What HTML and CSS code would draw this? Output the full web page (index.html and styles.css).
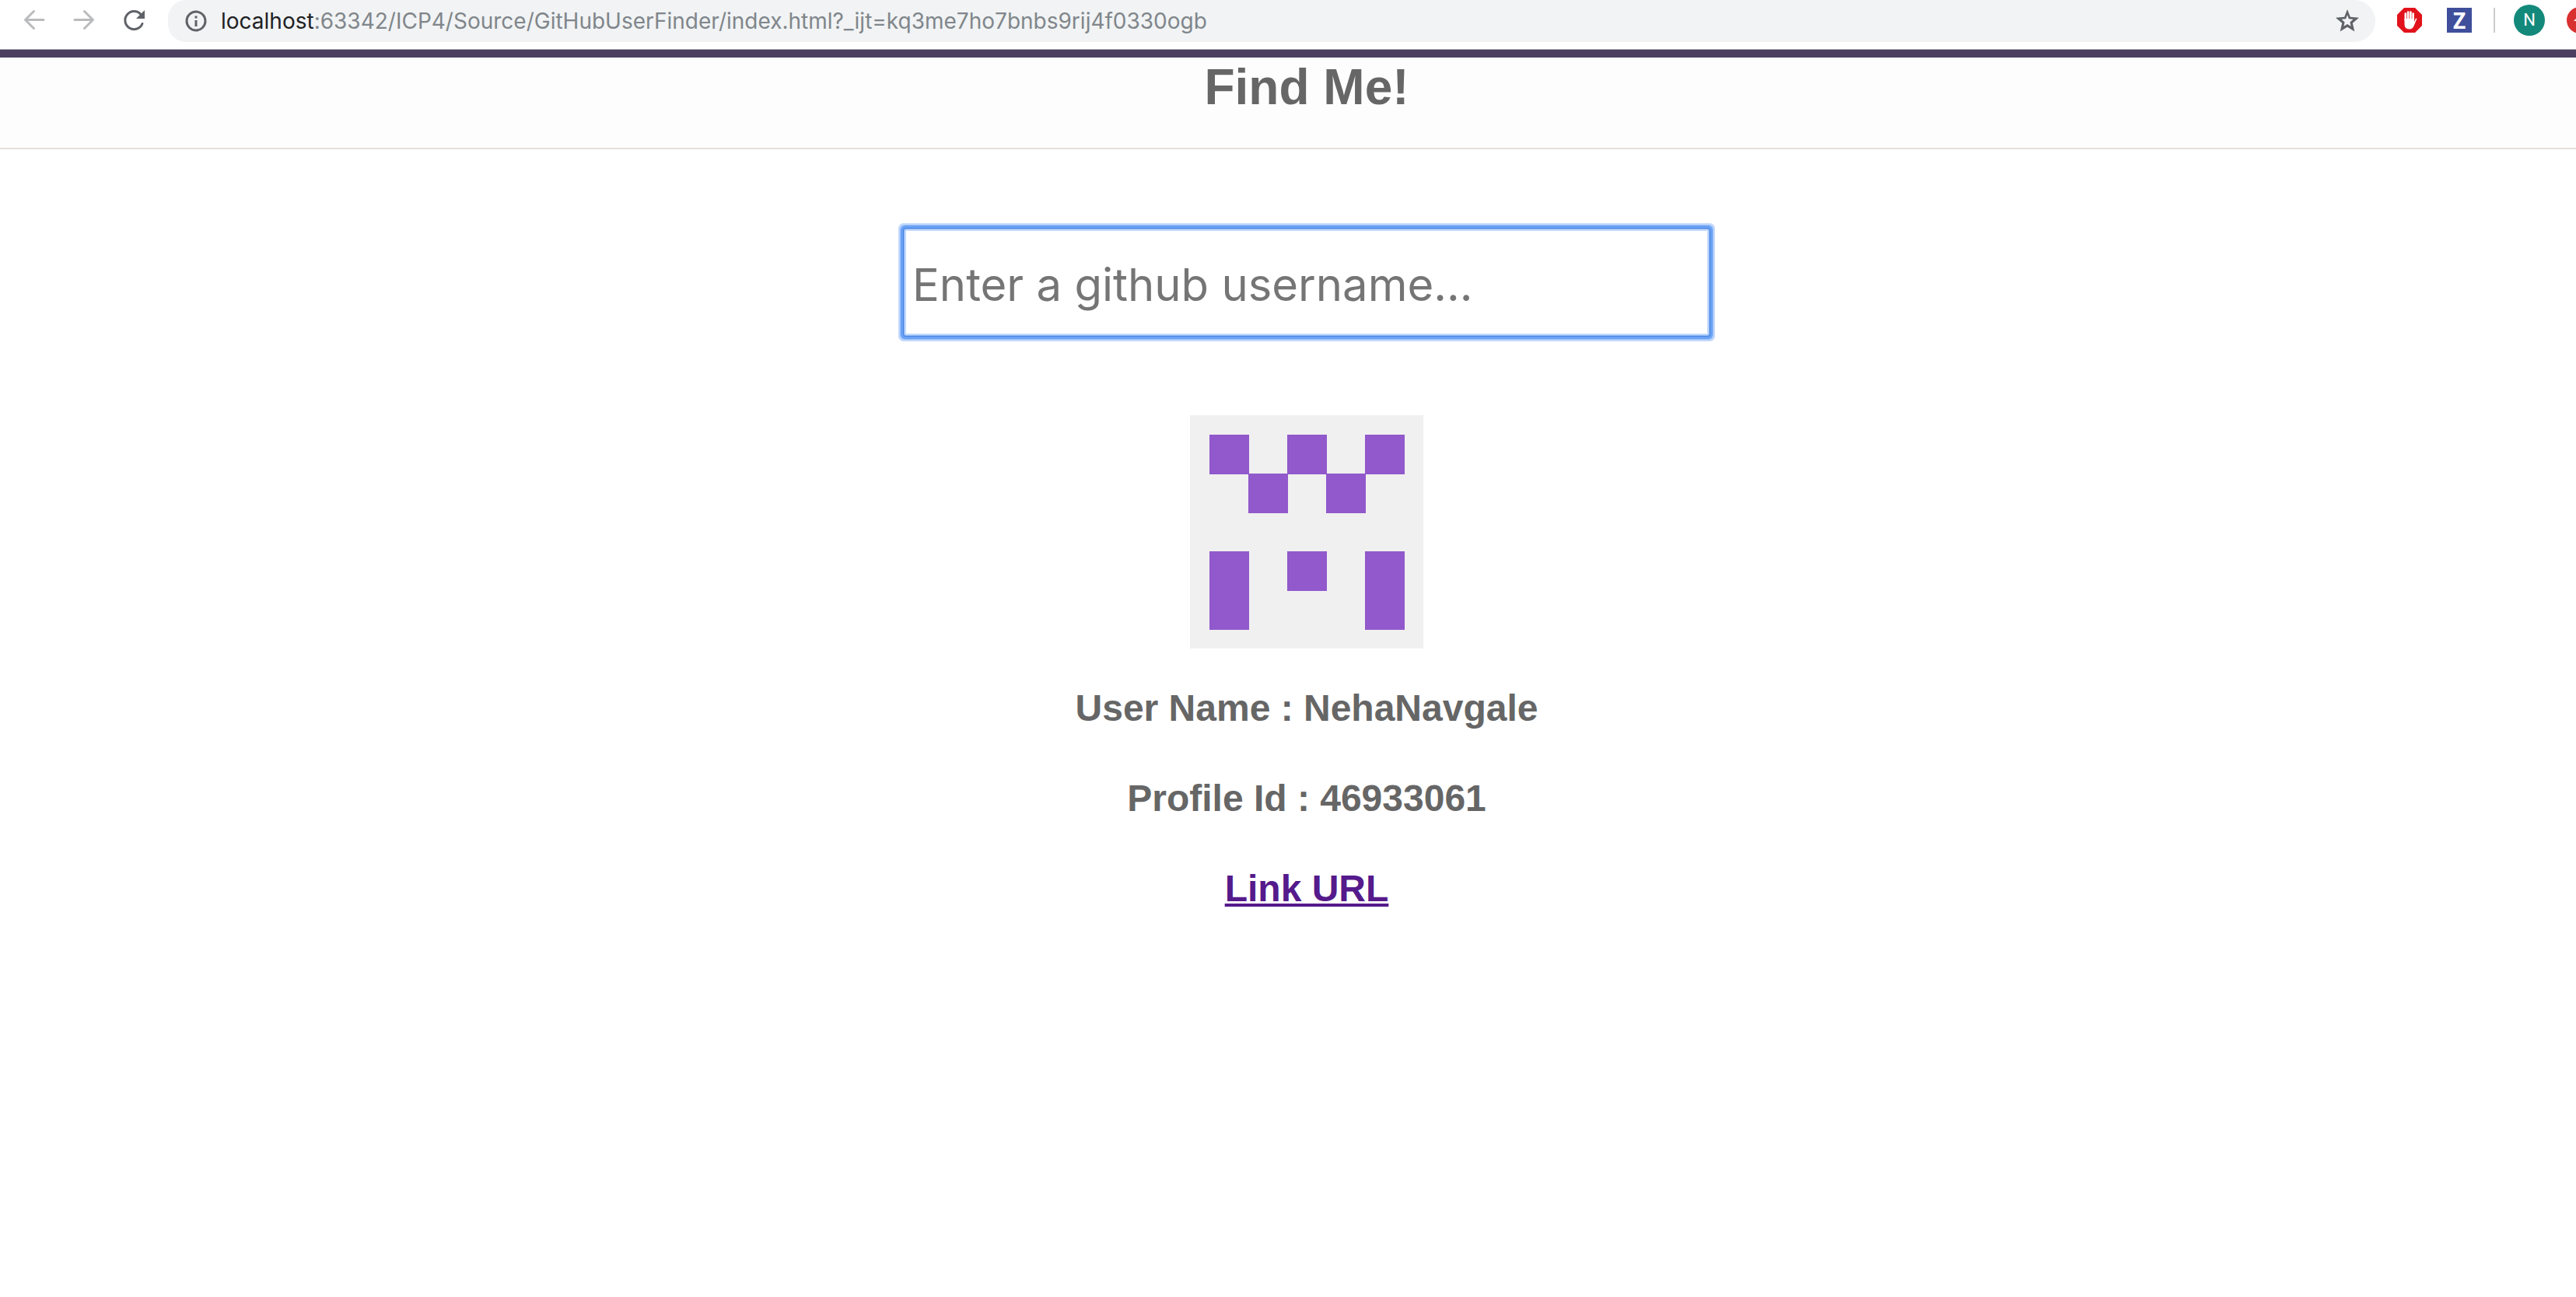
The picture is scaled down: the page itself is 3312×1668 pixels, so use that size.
FILE: index.html
```html
<!DOCTYPE html>
<html lang="en">
<head>
<meta charset="utf-8">
<title>Find Me!</title>
<link rel="stylesheet" href="styles.css">
</head>
<body>
<div class="toolbar">
  <div class="nav">
    <button class="icon-btn faded" type="button" aria-label="Back"><svg viewBox="0 0 32 32"><path d="M28 15.500H4.500M15.500 4.500l-11 11 11 11"/></svg></button>
    <button class="icon-btn faded" type="button" aria-label="Forward"><svg viewBox="0 0 32 32"><path d="M4 15.500h23.500M16.500 4.500l11 11-11 11"/></svg></button>
    <button class="icon-btn" type="button" aria-label="Reload"><svg viewBox="0 0 32 32"><path d="M27 20.500A11.500 11.500 0 1 1 25 8.500"/><path class="solid" d="M30 3v11H19z"/></svg></button>
  </div>
  <div class="omnibox">
    <svg class="info" viewBox="0 0 32 32"><circle cx="16" cy="16" r="12"/><path d="M16 15v8M16 9.500v3"/></svg>
    <span class="url"><span class="host">localhost</span>:63342/ICP4/Source/GitHubUserFinder/index.html?_ijt=kq3me7ho7bnbs9rij4f0330ogb</span>
    <button class="icon-btn star" type="button" aria-label="Bookmark"><svg viewBox="0 0 32 32"><path fill="currentColor" stroke="none" fill-rule="evenodd" d="M16 1l3.800 9.800L31 11.800l-8.200 7L25.300 29.500 16 23.800 6.700 29.500l2.500-10.700L1 11.800l11.200-1zM16 8.200l-1.900 5-5.600.5 4.100 3.700-1.200 5.400 4.600-2.800 4.600 2.800-1.200-5.400 4.100-3.700-5.600-.5z"/></svg></button>
  </div>
  <div class="extensions">
    <svg class="ext" viewBox="0 0 32 32"><path fill="#e1121b" d="M9 0h14l9 9v14l-9 9H9l-9-9V9z"/><path fill="none" stroke="#fff" stroke-width="2.600" stroke-linecap="round" d="M10.800 16V7.500M14.100 15V5.500M17.400 15V5.500M20.600 16V7.500"/><path fill="#fff" d="M9.500 14h12.400v4.500l2-4.700q1.300-.7 1.400.7L21.500 23.500Q20 27.500 15.500 27.500q-6 0-6-6.500z"/></svg>
    <span class="ext zed">Z</span>
    <span class="divider"></span>
    <span class="avatar">N</span>
    <span class="alert"><svg viewBox="0 0 34 34"><circle cx="17" cy="17" r="17" fill="#d93030"/><path d="M9 18l8-8 8 8z" fill="#fff"/></svg></span>
  </div>
</div>
<header class="banner"><h1>Find Me!</h1></header>
<main class="content">
  <input class="search" type="text" aria-label="GitHub username" placeholder="Enter a github username...">
  <svg class="identicon" viewBox="0 0 300 300" role="img" aria-label="Profile picture"><path fill="#9159cb" d="M25 25h51v51H25zM125 25h51v51h-51zM225 25h51v51h-51zM75 75h51v51H75zM175 75h51v51h-51zM25 175h51v101H25zM125 175h51v51h-51zM225 175h51v101h-51z"/></svg>
  <div class="profile">
    <h2>User Name : NehaNavgale</h2>
    <h2>Profile Id : 46933061</h2>
    <h2><a href="#">Link URL</a></h2>
  </div>
</main>
</body>
</html>
```
FILE: styles.css
```css
* { box-sizing: border-box; }

body {
  margin: 0;
  background: #fff;
  color: #666;
  font-family: "Liberation Sans", Arial, sans-serif;
  overflow-x: hidden;
}

.toolbar {
  display: flex;
  align-items: flex-start;
  height: 64px;
  padding-left: 28px;
  border-bottom: 1px solid #b0adb4;
  background: #fff;
  overflow: hidden;
}

.nav {
  display: flex;
  gap: 32px;
  width: 188px;
  padding-top: 10px;
}

.icon-btn {
  display: block;
  width: 32px;
  height: 32px;
  padding: 0;
  border: 0;
  background: none;
  color: #5f6368;
}

.icon-btn svg {
  display: block;
  fill: none;
  stroke: currentColor;
  stroke-width: 3;
  stroke-linecap: round;
  stroke-linejoin: round;
}

.icon-btn .solid { fill: currentColor; stroke: none; }
.faded { color: #babbbd; }

.omnibox {
  display: flex;
  flex: 1;
  align-items: center;
  height: 54px;
  padding: 0 20px;
  border-radius: 24px 28px 28px 24px;
  background: #f1f3f4;
}

.info {
  width: 32px;
  height: 32px;
  fill: none;
  stroke: #5f6368;
  stroke-width: 3;
}

.url {
  flex: 1;
  padding-left: 16px;
  color: #80868b;
  font: 28px/36px Inter, sans-serif;
}

.host { color: #202124; }

.extensions {
  display: flex;
  align-items: center;
  height: 52px;
  margin-left: 28px;
}

.ext {
  flex: none;
  width: 32px;
  height: 32px;
  margin-right: 32px;
}

.zed {
  margin-right: 28px;
  background: #3f4f9b;
  color: #fff;
  font: 700 28px/32px "Open Sans", sans-serif;
  text-align: center;
}

.divider {
  width: 2px;
  height: 32px;
  margin-right: 24px;
  background: #ccc;
}

.avatar {
  width: 40px;
  height: 40px;
  margin-right: 28px;
  border-radius: 50%;
  background: #13897b;
  color: #fff;
  font: 22px/40px Roboto, sans-serif;
  text-align: center;
}

.alert {
  width: 12px;
  height: 34px;
  overflow: hidden;
}

.alert svg { display: block; width: 34px; height: 34px; }

.banner {
  padding: 2px 0 42px 48px;
  border-top: 10px solid #4c3f62;
  border-bottom: 2px solid #e5e0dd;
  background: #fdfdfd;
  text-align: center;
}

h1 { margin: 0; font-size: 64px; line-height: 72px; }

.content {
  display: flex;
  flex-direction: column;
  align-items: center;
  padding: 103px 0 64px 48px;
}

.search {
  width: 100%;
  max-width: 1034px;
  height: 136px;
  padding: 6px 8px 0;
  border: 2px solid #c3d9fb;
  border-radius: 2px;
  outline: 0;
  background: #fff;
  box-shadow: 0 0 0 1px #8ab4f4, 0 0 0 2px #4a86de, 0 0 0 5px #6aa1f6, 0 0 0 6px #9cc2f9, 0 0 0 8px #c3d9fb;
  color: #757575;
  font: 58px/76px Inter, sans-serif;
}

.search::placeholder { color: #757575; opacity: 1; }

.identicon {
  width: 300px;
  height: 300px;
  margin-top: 103px;
  background: #f0f0f0;
}

.profile {
  display: flex;
  flex-direction: column;
  gap: 60px;
  padding-top: 49px;
  text-align: center;
}

h2 { margin: 0; font-size: 48px; line-height: 56px; }
h2 a { color: #551a8b; }
```
